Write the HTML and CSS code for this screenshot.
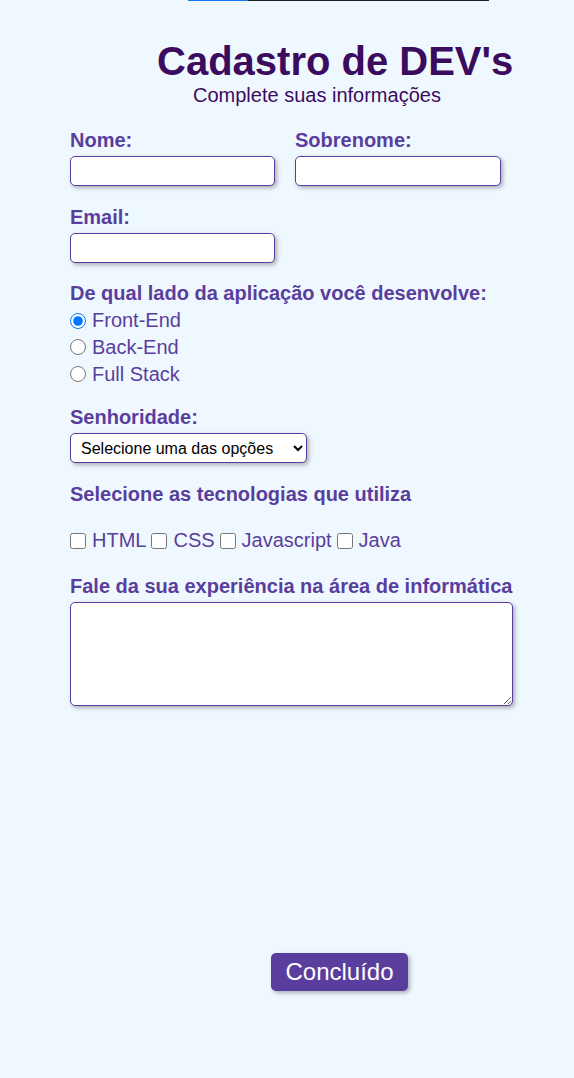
FILE: index.html
```html
<!DOCTYPE html>
<html lang="pt-BR">
<head>
<meta charset="utf-8">
<title>Cadastro de DEV's</title>
<link rel="stylesheet" href="styles.css">
</head>
<body>
<div class="progress"><span class="progress-fill"></span></div>
<header class="header">
  <h1 class="title">Cadastro de DEV's</h1>
  <p class="subtitle">Complete suas informações</p>
</header>
<form class="form">
  <div class="section row">
    <div class="field">
      <label class="label" for="nome">Nome:</label>
      <input class="input" id="nome" type="text">
    </div>
    <div class="field">
      <label class="label" for="sobrenome">Sobrenome:</label>
      <input class="input" id="sobrenome" type="text">
    </div>
  </div>
  <div class="section s-email">
    <label class="label" for="email">Email:</label>
    <input class="input" id="email" type="email">
  </div>
  <div class="section s-radio">
    <div class="label">De qual lado da aplicação você desenvolve:</div>
    <div class="options">
      <label class="opt"><input class="radio" type="radio" name="lado" checked>Front-End</label>
      <label class="opt"><input class="radio" type="radio" name="lado">Back-End</label>
      <label class="opt"><input class="radio" type="radio" name="lado">Full Stack</label>
    </div>
  </div>
  <div class="section s-select">
    <label class="label" for="senioridade">Senhoridade:</label>
    <select class="select" id="senioridade">
      <option>Selecione uma das opções</option>
      <option>Júnior</option>
      <option>Pleno</option>
      <option>Sênior</option>
    </select>
  </div>
  <div class="section s-tech">
    <div class="label">Selecione as tecnologias que utiliza</div>
    <div class="checks">
      <label class="chk"><input class="checkbox" type="checkbox">HTML</label>
      <label class="chk"><input class="checkbox" type="checkbox">CSS</label>
      <label class="chk"><input class="checkbox" type="checkbox">Javascript</label>
      <label class="chk"><input class="checkbox" type="checkbox">Java</label>
    </div>
  </div>
  <div class="section s-exp">
    <label class="label" for="exp">Fale da sua experiência na área de informática</label>
    <textarea class="textarea" id="exp"></textarea>
  </div>
  <button class="button" type="button">Concluído</button>
</form>
</body>
</html>
```
FILE: styles.css
```css
* { box-sizing: border-box; }
html, body { margin: 0; padding: 0; }
body {
  background: #f0f8ff;
  font-family: "Liberation Sans", Arial, sans-serif;
  width: 574px;
  min-height: 1078px;
}
.progress {
  margin-left: 188px;
  width: 301px;
  height: 1px;
  background: #1c1c1c;
  display: flex;
}
.progress-fill {
  width: 60px;
  height: 1px;
  background: #1279e8;
}
.header { margin-top: 37px; }
.title {
  margin: 0;
  padding-left: 157px;
  font-size: 40px;
  line-height: 46px;
  font-weight: bold;
  color: #3b0b5e;
}
.subtitle {
  margin: 0;
  padding-left: 193px;
  font-size: 20px;
  line-height: 23px;
  color: #3b0b5e;
}
.form {
  padding-left: 70px;
  margin-top: 21.6px;
  color: #5a3e9d;
}
.label {
  display: block;
  font-size: 20px;
  line-height: 23px;
  font-weight: bold;
  color: #5a3e9d;
  margin-bottom: 4.4px;
}
.row { display: flex; gap: 20px; }
.field { width: 205px; }
.input {
  display: block;
  width: 205px;
  height: 30px;
  border: 1px solid #5a3e9d;
  border-radius: 5px;
  background: #fff;
  box-shadow: 2px 2px 4px rgba(0,0,0,0.3);
  padding: 0 6px;
  font-family: inherit;
  font-size: 16px;
}
.row .field:last-child .input { width: 206px; }
.s-email { margin-top: 19.6px; }
.s-radio { margin-top: 18.6px; }
.s-radio .label { margin-bottom: 2.9px; }
.options { display: flex; flex-direction: column; }
.opt {
  display: flex;
  align-items: center;
  gap: 6px;
  height: 26.67px;
  font-size: 20px;
  line-height: 23px;
  color: #5a3e9d;
}
.radio {
  width: 16px;
  height: 16px;
  margin: 0;
}
.s-select { margin-top: 18.2px; }
.s-select .label { margin-bottom: 4.6px; }
.select {
  display: block;
  width: 237px;
  height: 30px;
  border: 1px solid #5a3e9d;
  border-radius: 5px;
  background: #fff;
  box-shadow: 2px 2px 4px rgba(0,0,0,0.3);
  font-family: "Liberation Sans", Arial, sans-serif;
  font-size: 16px;
  color: #000;
  padding-left: 6px;
}
.s-tech { margin-top: 19.3px; }
.s-tech .label { margin-bottom: 23.5px; }
.checks {
  display: flex;
  align-items: center;
  gap: 5px;
  height: 23px;
}
.chk {
  display: flex;
  align-items: center;
  gap: 6px;
  font-size: 20px;
  line-height: 23px;
  color: #5a3e9d;
}
.checkbox {
  width: 16px;
  height: 16px;
  margin: 0;
}
.s-exp { margin-top: 22.8px; }
.textarea {
  display: block;
  width: 443px;
  height: 103.5px;
  border: 1px solid #5a3e9d;
  border-radius: 5px;
  background: #fff;
  box-shadow: 2px 2px 4px rgba(0,0,0,0.3);
  font-family: inherit;
  font-size: 16px;
}
.button {
  display: block;
  margin-top: 247px;
  margin-left: 201px;
  width: 137px;
  height: 38px;
  padding: 0;
  border: none;
  border-radius: 5px;
  background: #5a3e9d;
  color: #fff;
  font-family: "Liberation Sans", Arial, sans-serif;
  font-size: 24px;
  line-height: 28px;
  box-shadow: 2px 2px 4px rgba(0,0,0,0.3);
  cursor: pointer;
}
```
